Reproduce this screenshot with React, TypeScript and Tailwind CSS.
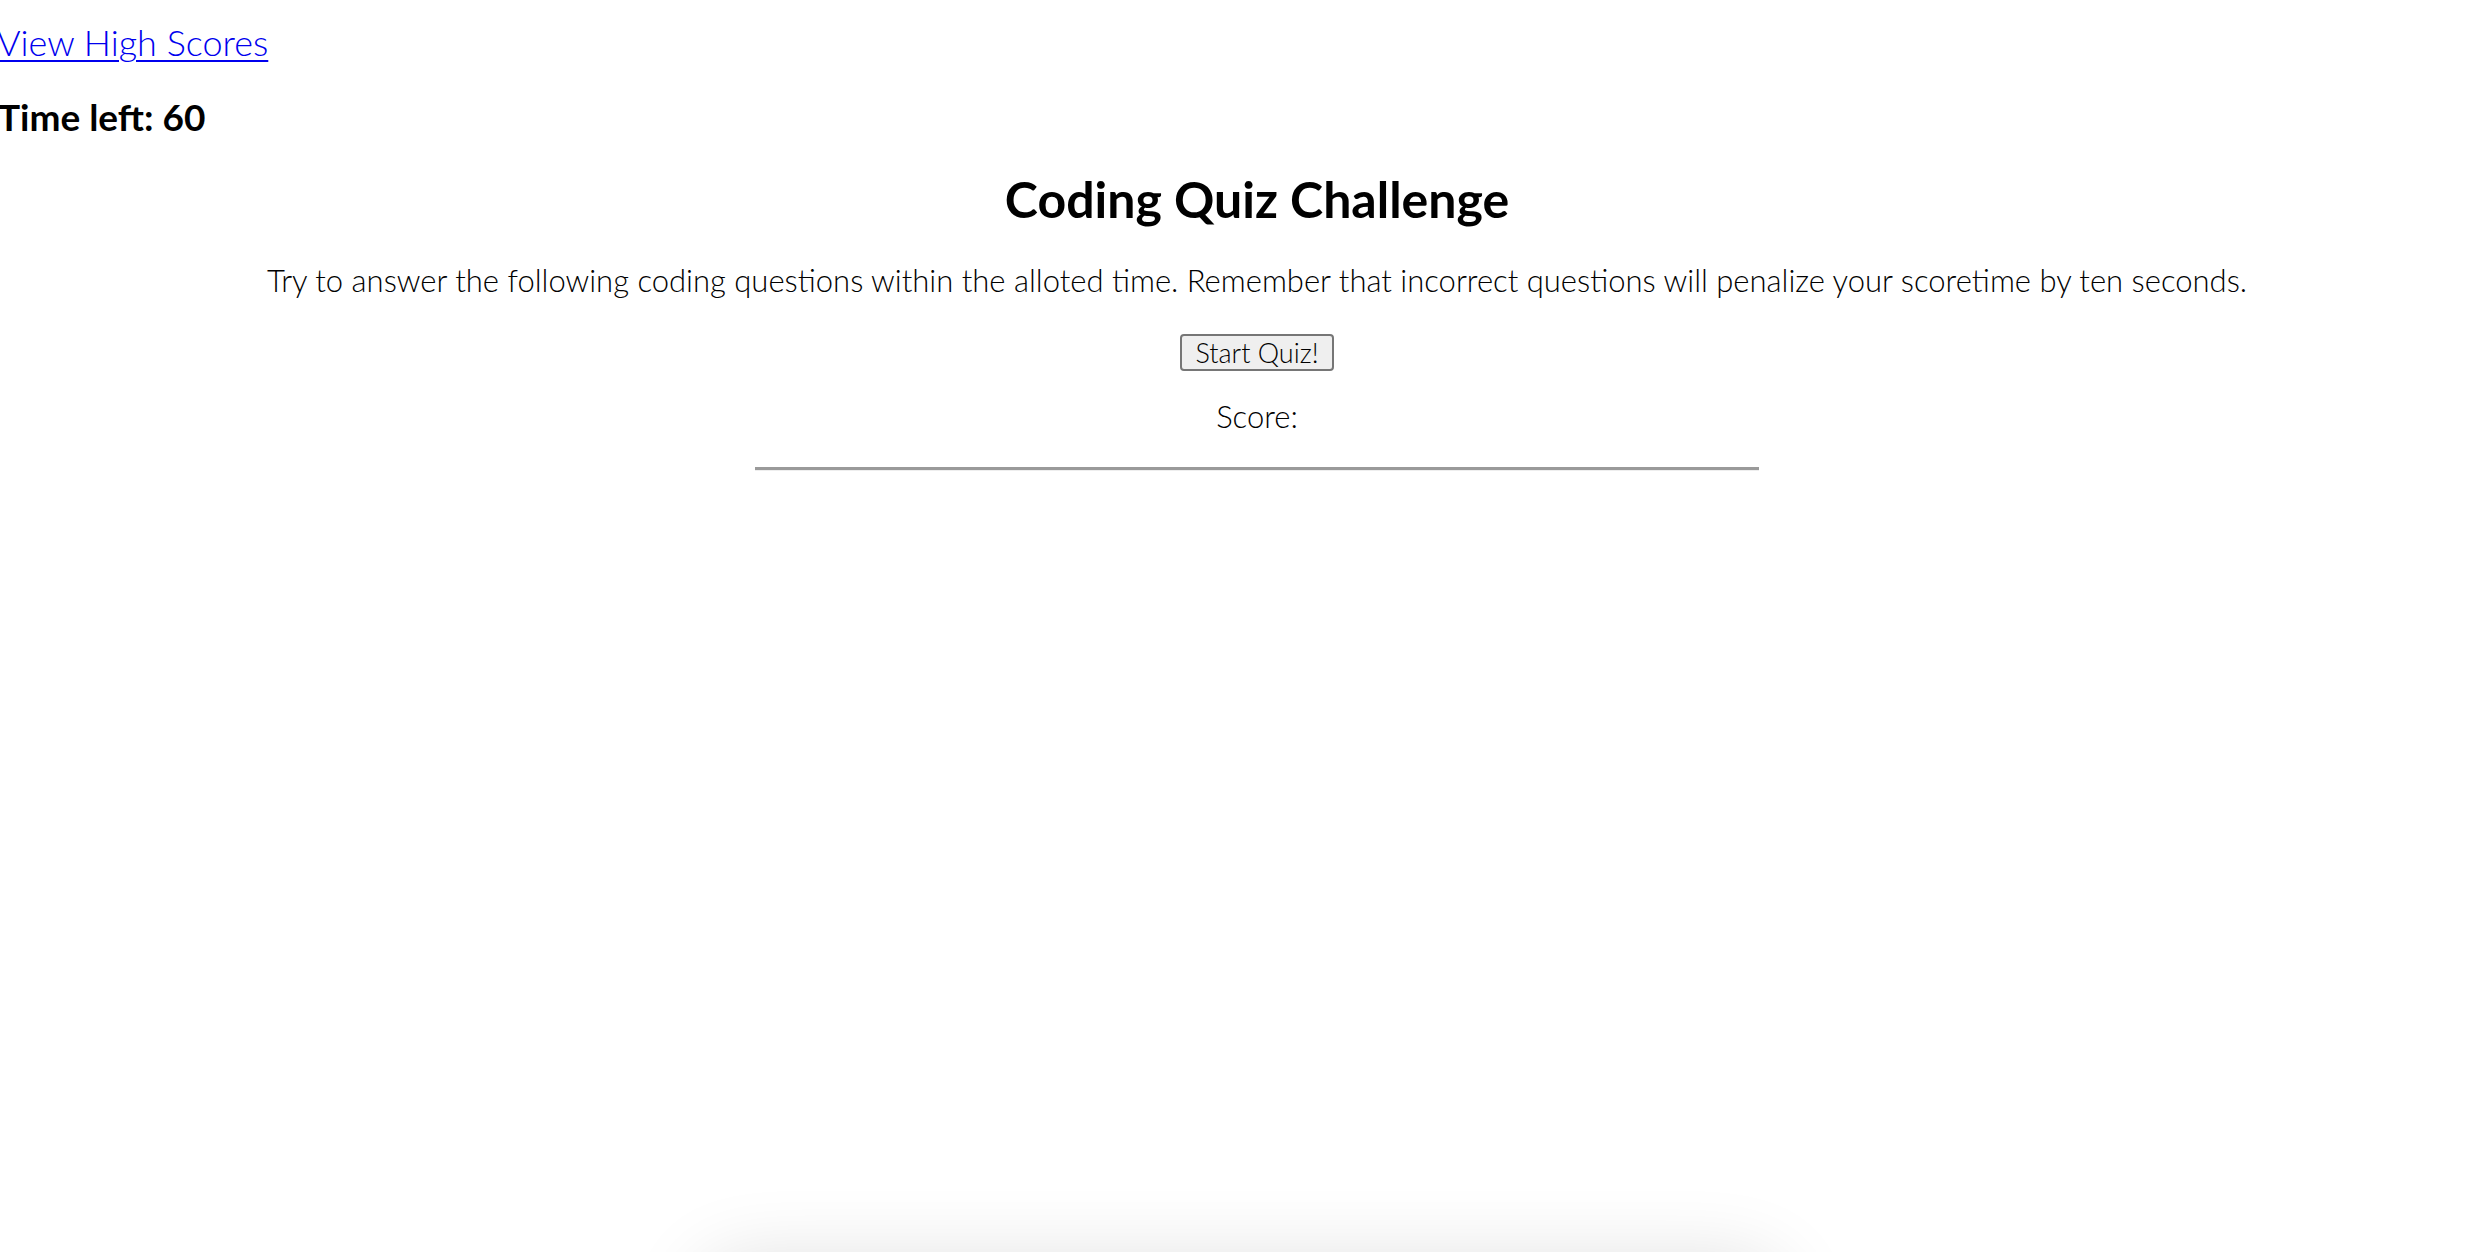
import React from "react";

export default function App() {
  return (
    <div className="h-screen overflow-hidden bg-white text-black font-['Lato',sans-serif]">
      <a href="#" className="block -ml-[3px] pt-[15px] text-[36px] leading-[54px] font-light text-[#0000ee] underline underline-offset-[4px] decoration-[2px] w-fit">
        View High Scores
      </a>
      <h3 className="-ml-[2px] mt-[25px] text-[37px] leading-[46px] font-bold">Time left: 60</h3>

      <div className="pl-[32px] text-center">
        <h1 className="mt-[29px] text-[50px] leading-[60px] font-bold">Coding Quiz Challenge</h1>
        <p className="mt-[31px] text-[31px] leading-[40px] font-light">
          Try to answer the following coding questions within the alloted time. Remember that incorrect questions will penalize your scoretime by ten seconds.
        </p>
        <button className="mx-auto mt-[34px] block w-[154px] h-[37px] rounded-[4px] border-2 border-[#767676] bg-[#efefef] text-[27px] leading-none font-light">
          Start Quiz!
        </button>
        <div className="mt-[25px] text-[31px] leading-[40px] font-light">Score:</div>
        <hr className="mx-auto mt-[31px] w-[1004px] border-t-[3px] border-[#9a9a9a] border-b border-b-[#eeeeee]" />
      </div>

      <div className="mx-auto mt-[792px] h-[400px] w-[1080px] rounded-[40px] shadow-[0_0_80px_rgba(0,0,0,0.14)]" />
    </div>
  );
}
